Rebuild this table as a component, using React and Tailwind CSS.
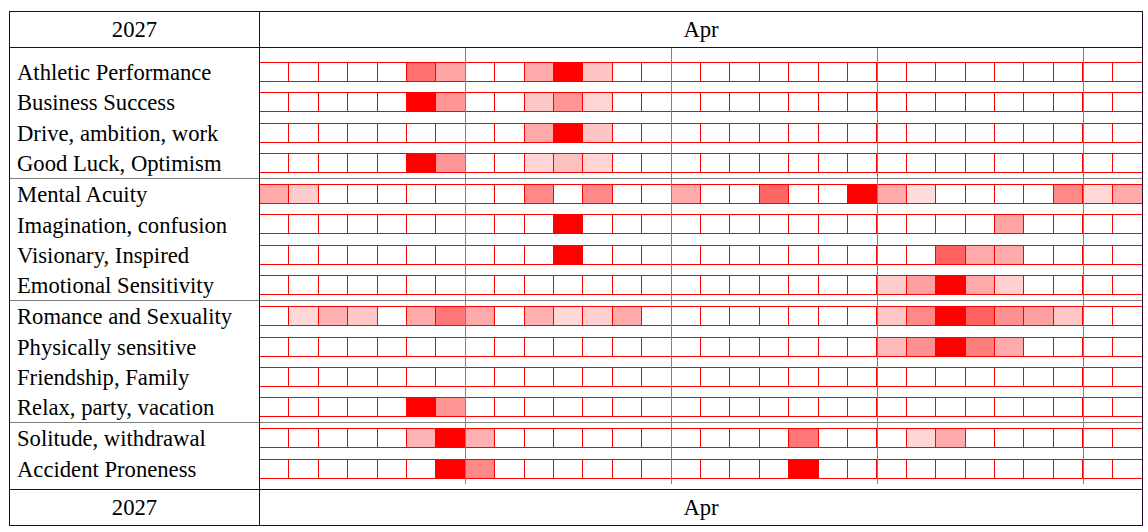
const ROWS = [
  { label: 'Athletic Performance', cells: { 5: 'bg-[#ff7070]', 6: 'bg-[#ffa5a5]', 9: 'bg-[#ffaaaa]', 10: 'bg-[#ff0000]', 11: 'bg-[#ffc5c5]' } },
  { label: 'Business Success', cells: { 5: 'bg-[#ff0000]', 6: 'bg-[#ff9595]', 9: 'bg-[#ffc8c8]', 10: 'bg-[#ff9595]', 11: 'bg-[#ffd5d5]' } },
  { label: 'Drive, ambition, work', cells: { 9: 'bg-[#ffaaaa]', 10: 'bg-[#ff0000]', 11: 'bg-[#ffc5c5]' } },
  { label: 'Good Luck, Optimism', cells: { 5: 'bg-[#ff0000]', 6: 'bg-[#ff9595]', 9: 'bg-[#ffd5d5]', 10: 'bg-[#ffc0c0]', 11: 'bg-[#ffd5d5]' } },
  { label: 'Mental Acuity', cells: { 0: 'bg-[#ffaaaa]', 1: 'bg-[#ffcccc]', 9: 'bg-[#ff8888]', 11: 'bg-[#ff8888]', 14: 'bg-[#ffaaaa]', 17: 'bg-[#ff6666]', 20: 'bg-[#ff0000]', 21: 'bg-[#ffaaaa]', 22: 'bg-[#ffdddd]', 27: 'bg-[#ff8888]', 28: 'bg-[#ffd8d8]', 29: 'bg-[#ffaaaa]' } },
  { label: 'Imagination, confusion', cells: { 10: 'bg-[#ff0000]', 25: 'bg-[#ffa5a5]' } },
  { label: 'Visionary, Inspired', cells: { 10: 'bg-[#ff0000]', 23: 'bg-[#ff6060]', 24: 'bg-[#ffaaaa]', 25: 'bg-[#ffaaaa]' } },
  { label: 'Emotional Sensitivity', cells: { 21: 'bg-[#ffcccc]', 22: 'bg-[#ffa0a0]', 23: 'bg-[#ff0000]', 24: 'bg-[#ffaaaa]', 25: 'bg-[#ffd0d0]' } },
  { label: 'Romance and Sexuality', cells: { 1: 'bg-[#ffd8d8]', 2: 'bg-[#ffb0b0]', 3: 'bg-[#ffc8c8]', 5: 'bg-[#ffaaaa]', 6: 'bg-[#ff7777]', 7: 'bg-[#ffaaaa]', 9: 'bg-[#ffb0b0]', 10: 'bg-[#ffd8d8]', 11: 'bg-[#ffd0d0]', 12: 'bg-[#ffaaaa]', 21: 'bg-[#ffc8c8]', 22: 'bg-[#ff8888]', 23: 'bg-[#ff0000]', 24: 'bg-[#ff6060]', 25: 'bg-[#ff9090]', 26: 'bg-[#ffa0a0]', 27: 'bg-[#ffc8c8]' } },
  { label: 'Physically sensitive', cells: { 21: 'bg-[#ffbbbb]', 22: 'bg-[#ff9090]', 23: 'bg-[#ff0000]', 24: 'bg-[#ff7f7f]', 25: 'bg-[#ffaaaa]' } },
  { label: 'Friendship, Family', cells: {} },
  { label: 'Relax, party, vacation', cells: { 5: 'bg-[#ff0000]', 6: 'bg-[#ff9595]' } },
  { label: 'Solitude, withdrawal', cells: { 5: 'bg-[#ffb5b5]', 6: 'bg-[#ff0000]', 7: 'bg-[#ffb0b0]', 18: 'bg-[#ff7777]', 22: 'bg-[#ffd5d5]', 23: 'bg-[#ffaaaa]' } },
  { label: 'Accident Proneness', cells: { 6: 'bg-[#ff0000]', 7: 'bg-[#ff8888]', 18: 'bg-[#ff0000]' } },
];

const DAYS = Array.from({ length: 30 }, (_, i) => i);
const GROUP_END = new Set([3, 7, 11]);
const WEEK_LINES = ['left-[205px]', 'left-[411px]', 'left-[617px]', 'left-[823px]'];

function rowClass(i) {
  return GROUP_END.has(i)
    ? 'h-[30.54px] border-b border-[#808080]'
    : 'h-[30.54px]';
}

export default function App() {
  return (
    <div className="w-[1148px] h-[532px] bg-white pt-[11px] pl-[9px] [font-family:Liberation_Serif,Times_New_Roman,serif] text-black text-[22.67px] leading-none">
      <div className="w-[1134px] border border-[#330033]">
        {/* header */}
        <div className="flex h-[36px] border-b border-[#330033]">
          <div className="w-[250px] border-r border-[#330033] flex items-center justify-center pt-[2px]">2027</div>
          <div className="flex-1 flex items-center justify-center pt-[2px]">Apr</div>
        </div>

        {/* body */}
        <div className="flex h-[442px] border-b border-[#330033]">
          <div className="w-[250px] border-r border-[#330033] pt-[8.5px]">
            {ROWS.map((r, i) => (
              <div key={r.label} className={rowClass(i) + ' flex items-center pl-[7px] pt-[3px] whitespace-nowrap'}>
                {r.label}
              </div>
            ))}
          </div>
          <div className="flex-1 relative pt-[8.5px]">
            {ROWS.map((r, i) => (
              <div key={r.label} className={rowClass(i) + ' flex items-center'}>
                <div className="w-full h-[20px] grid grid-cols-30 border-y border-[#ff0000]">
                  {DAYS.map((d) => (
                    <div
                      key={d}
                      className={
                        (d < 29 ? 'border-r border-[#ff0000] ' : '') + (r.cells[d] || 'bg-white')
                      }
                    />
                  ))}
                </div>
              </div>
            ))}
            {WEEK_LINES.map((cls) => (
              <div key={cls} className={'absolute top-0 bottom-[5px] w-px bg-[#808080] ' + cls} />
            ))}
          </div>
        </div>

        {/* footer */}
        <div className="flex h-[35px]">
          <div className="w-[250px] border-r border-[#330033] flex items-center justify-center pt-[2px]">2027</div>
          <div className="flex-1 flex items-center justify-center pt-[2px]">Apr</div>
        </div>
      </div>
    </div>
  );
}
